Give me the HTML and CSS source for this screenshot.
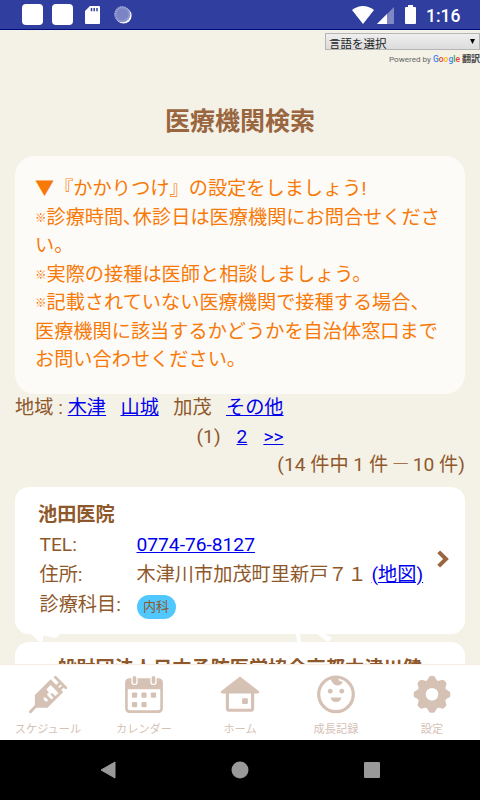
FILE: index.html
```
<!DOCTYPE html>
<html lang="ja">
  <head>
    <meta charset="utf-8">
    <title>医療機関検索</title>
    <link rel="stylesheet" href="styles.css">
  </head>
  <body>

    <!-- status bar -->
    <header class="status">
      <div class="status-left">
        <span class="app-icon"></span>
        <span class="app-icon"></span>
        <svg class="sd" width="15" height="18" viewBox="0 0 15 18">
          <path d="M5 0H14Q15 0 15 1V17Q15 18 14 18H1Q0 18 0 17V5Z" fill="#fff"/>
          <path d="M6.5 2v3.3M9.2 2v3.3M12 2v3.3" stroke="#303f9f" stroke-width="1.5"/>
        </svg>
        <svg class="sync" width="18" height="18" viewBox="0 0 18 18">
          <circle cx="9.6" cy="9.6" r="8" fill="#fff"/>
          <circle cx="8.3" cy="8.3" r="8" fill="#7b84c4"/>
          <circle cx="8.3" cy="8.3" r="7" fill="none" stroke="#a8aed9" stroke-width="2" stroke-dasharray="1 1.2"/>
        </svg>
      </div>
      <div class="status-right">
        <svg width="22" height="18" viewBox="0 0 22 18"><path d="M0 4Q11 -4 22 4L11 18Z" fill="#fff"/></svg>
        <svg class="signal" width="17" height="17" viewBox="0 0 17 17"><path d="M0 17L17 0V17Z" fill="#7f88c5"/><path d="M0 17L10 7V17Z" fill="#fff"/></svg>
        <svg class="battery" width="11" height="19" viewBox="0 0 11 19"><path d="M3 0H8V2H10Q11 2 11 3V18Q11 19 10 19H1Q0 19 0 18V3Q0 2 1 2H3Z" fill="#fff"/></svg>
        <span class="clock">1:16</span>
      </div>
    </header>

    <main class="content">
      <div class="translate">
        <div class="lang"><span>言語を選択</span><i></i></div>
        <div class="powered">Powered by <b class="google"><i class="g-blue">G</i><i class="g-red">o</i><i class="g-yellow">o</i><i class="g-blue">g</i><i class="g-green">l</i><i class="g-red">e</i></b> <b class="honyaku">翻訳</b></div>
      </div>

      <h1>医療機関検索</h1>

      <div class="notice">
        ▼『かかりつけ』の設定をしましょう!<br>
        <span class="kome">※</span>診療時間､休診日は医療機関にお問合せください。<br>
        <span class="kome">※</span>実際の接種は医師と相談しましょう。<br>
        <span class="kome">※</span>記載されていない医療機関で接種する場合、医療機関に該当するかどうかを自治体窓口までお問い合わせください。
      </div>

      <div class="area">
        <span class="area-label">地域 :</span>
        <a href="#">木津</a>
        <a href="#">山城</a>
        <span>加茂</span>
        <a href="#">その他</a>
      </div>
      <div class="pager">
        <span>(1)</span>
        <a href="#">2</a>
        <a href="#">&gt;&gt;</a>
      </div>
      <div class="count">(14 件中 1 件 <span class="dash">─</span> 10 件)</div>

      <section class="card">
        <h2>池田医院</h2>
        <dl>
          <dt>TEL:</dt>
          <dd><a href="#">0774-76-8127</a></dd>
          <dt>住所:</dt>
          <dd>木津川市加茂町里新戸７１ <a href="#">(地図)</a></dd>
          <dt>診療科目:</dt>
          <dd><span class="tag">内科</span></dd>
        </dl>
        <svg class="arrow" width="12" height="18" viewBox="0 0 12 18"><path d="M1.7 1.8L9 9L1.7 16.2" fill="none" stroke="#996640" stroke-width="4"/></svg>
      </section>

      <!-- background doodles between the cards -->
      <svg class="doodle" width="450" height="8" viewBox="0 0 450 8">
        <path d="M16 0H28V7.500H24Q20 4 16 0ZM28 0H45L41 4L28 1.500ZM281 0h4l1 8h-4zM302 0h8l7 4-4 4z" fill="#fff"/>
      </svg>

      <section class="card card-next">
        <h2>一般財団法人日本予防医学協会京都木津川健</h2>
      </section>
    </main>

    <!-- tab bar -->
    <nav class="tabs">
      <a class="tab">
        <svg width="42" height="42" viewBox="0 0 40 40">
          <path d="M3.300 37L9 31" stroke="#d6c1b5" stroke-width="2.800" stroke-linecap="round"/>
          <path d="M7.500 32V21L22.500 6L34.500 18L19.500 33H8.500Z" fill="#d6c1b5"/>
          <path d="M18.500 15.500L22.500 11.500L30 19L27 22L24 19L22 20.500Z" fill="#fff"/>
          <path d="M17 24.500L18.500 26M20.500 20.500L23.500 23.500" stroke="#fff" stroke-width="2.600" stroke-linecap="round"/>
          <path d="M27 4L37 14M32 9L27.500 13.500M35 12L31 16" stroke="#d6c1b5" stroke-width="2.600" stroke-linecap="round"/>
        </svg>
        <span>スケジュール</span>
      </a>
      <a class="tab">
        <svg width="42" height="42" viewBox="0 0 40 40">
          <rect x="2" y="5" width="36" height="33" rx="4" fill="#d6c1b5"/>
          <path d="M4.500 15.500H35.500V33.500Q35.500 35.500 33.500 35.500H6.500Q4.500 35.500 4.500 33.500Z" fill="#fff"/>
          <path d="M11 4V8.500M29 4V8.500" stroke="#fff" stroke-width="6" stroke-linecap="round"/>
          <path d="M11 4.500V8.500M29 4.500V8.500" stroke="#d6c1b5" stroke-width="3.500" stroke-linecap="round"/>
          <g fill="#d6c1b5">
            <rect x="8.500" y="18.500" width="5" height="5" rx="1"/><rect x="17.500" y="18.500" width="5" height="5" rx="1"/><rect x="26.500" y="18.500" width="5" height="5" rx="1"/>
            <rect x="8.500" y="27.500" width="5" height="5" rx="1"/><rect x="17.500" y="27.500" width="5" height="5" rx="1"/>
          </g>
        </svg>
        <span>カレンダー</span>
      </a>
      <a class="tab">
        <svg width="42" height="42" viewBox="0 0 40 40">
          <path d="M20 4L37.500 17.500Q38 19 36.500 19H3.500Q2 19 2.500 17.500Z" fill="#d6c1b5" stroke="#d6c1b5" stroke-linejoin="round"/>
          <path d="M8 18V33.500Q8 35.500 10 35.500H30Q32 35.500 32 33.500V18" fill="none" stroke="#d6c1b5" stroke-width="3"/>
          <rect x="22" y="24" width="5.500" height="5.500" rx="1" fill="#d6c1b5"/>
        </svg>
        <span>ホーム</span>
      </a>
      <a class="tab">
        <svg width="42" height="42" viewBox="0 0 40 40">
          <circle cx="20" cy="20.300" r="16.500" fill="none" stroke="#d6c1b5" stroke-width="3"/>
          <path d="M14.500 4C15.500 9 18.500 13 23.500 11.500Q26 10.500 26.500 8Q22.500 9 22 4Z" fill="#d6c1b5"/>
          <circle cx="14.500" cy="17.300" r="2.300" fill="#d6c1b5"/>
          <circle cx="25.500" cy="17.300" r="2.300" fill="#d6c1b5"/>
          <path d="M15 23.300H25Q24.500 27.500 20 27.500T15 23.300Z" fill="#d6c1b5"/>
        </svg>
        <span>成長記録</span>
      </a>
      <a class="tab">
        <svg width="42" height="42" viewBox="0 0 40 40">
          <g fill="#d6c1b5">
            <path id="tooth" d="M14.500 8.300L17.500 3.300Q20 2 22.500 3.300L25.500 8.300V32.300L22.500 37.300Q20 38.600 17.500 37.300L14.500 32.300Z"/>
            <use href="#tooth" transform="rotate(45 20 20.300)"/>
            <use href="#tooth" transform="rotate(90 20 20.300)"/>
            <use href="#tooth" transform="rotate(135 20 20.300)"/>
            <circle cx="20" cy="20.300" r="13.800"/>
          </g>
          <circle cx="20" cy="20.300" r="6" fill="#fff"/>
        </svg>
        <span>設定</span>
      </a>
    </nav>

    <!-- android buttons -->
    <footer class="android">
      <svg width="16" height="18" viewBox="0 0 16 18"><path d="M15 1V17L1 9Z" fill="#999" stroke="#999" stroke-linejoin="round"/></svg>
      <svg width="18" height="18" viewBox="0 0 18 18"><circle cx="9" cy="9" r="8.500" fill="#999"/></svg>
      <svg width="16" height="16" viewBox="0 0 16 16"><rect width="16" height="16" rx="1" fill="#999"/></svg>
    </footer>

  </body>
</html>
```
FILE: styles.css
```
* {
  box-sizing: border-box;
}

body {
  margin: 0;
  width: 480px;
  height: 800px;
  display: flex;
  flex-direction: column;
  overflow: hidden;
  background: #f4f1e6;
  color: #8f582b;
  font-family: Roboto, 'Noto Sans CJK JP', sans-serif;
  font-size: 19.2px;
  font-weight: 400;
  line-height: 28.5px;
}

svg {
  display: block;
}

a {
  color: #0000ee;
}

/* status bar */
.status {
  flex: none;
  height: 30px;
  display: flex;
  justify-content: space-between;
  background: #303f9f;
  border-bottom: 1px solid #000a80;
}

.status-left,
.status-right {
  display: flex;
  align-items: center;
}

.status-left {
  padding-left: 22px;
}

.app-icon {
  width: 21px;
  height: 21px;
  margin-right: 9px;
  border-radius: 4px;
  background: #fff;
}

.sd {
  margin-left: 3px;
}

.sync {
  margin-left: 14px;
}

.status-right {
  padding-right: 19px;
}

.signal {
  margin: 2px 0 0 3px;
}

.battery {
  margin-left: 11px;
}

.clock {
  width: 35px;
  margin: 3px 0 0 10px;
  color: #fff;
  font-size: 17.5px;
  font-weight: 500;
  white-space: nowrap;
}

.content {
  flex: 1;
  min-height: 0;
  padding: 3px 15px 0;
  overflow: hidden;
}

/* google translate box */
.translate {
  height: 33px;
  margin-right: -15px;
}

.lang {
  width: 155px;
  height: 17px;
  margin-left: auto;
  padding: 0 4px 0 3px;
  display: flex;
  justify-content: space-between;
  overflow: hidden;
  border: 1px solid #b5b5b5;
  background: linear-gradient(#efefef, #dcdcdc);
  color: #222;
  font-size: 11.5px;
  line-height: 20px;
}

.lang i {
  margin-top: 5px;
  width: 5px;
  height: 5px;
  background: #000;
  clip-path: polygon(0 0, 100% 0, 50% 100%);
}

.powered {
  display: flex;
  justify-content: flex-end;
  gap: 2px;
  color: #666;
  font-size: 8.1px;
  line-height: 19px;
  white-space: nowrap;
}

.google {
  font-size: 8.5px;
  font-weight: 500;
  line-height: 18px;
}

.google i {
  font-style: normal;
}

.g-blue { color: #4285f4; }
.g-red { color: #ea4335; }
.g-yellow { color: #fbbc05; }
.g-green { color: #34a853; }

.honyaku {
  color: #444;
  font-size: 9px;
}

h1 {
  margin: 38px 0 16px;
  text-align: center;
  color: #996640;
  font-size: 25px;
  line-height: 36px;
}

.notice {
  height: 238px;
  padding: 19px 20px 0;
  border-radius: 20px;
  background: #fdfbf8;
  color: #f77a08;
}

.kome {
  font-size: 11.5px;
  font-weight: 700;
  line-height: 1;
  vertical-align: 2px;
}

/* region links and paging */
.area,
.pager {
  display: flex;
}

.area {
  gap: 14.4px;
}

.area-label {
  margin-right: -9.5px;
}

.pager {
  justify-content: center;
  gap: 16px;
}

.count {
  height: 36px;
  text-align: right;
}

.dash {
  display: inline-block;
  transform: scaleX(.75);
  margin: 0 -2px;
}

.card {
  position: relative;
  height: 146.500px;
  padding: 12.500px 23px 0;
  border-radius: 14px;
  background: #fff;
}

h2 {
  margin: 0;
  font-size: 19.2px;
  line-height: 30px;
}

dl {
  margin: 0 -10px 0 1.500px;
  display: grid;
  grid-template-columns: 97px 1fr;
  grid-auto-rows: 30px;
  line-height: 30px;
}

dd {
  margin: 0;
  white-space: nowrap;
}

.tag {
  display: block;
  width: 39px;
  height: 24px;
  margin-top: 5px;
  border-radius: 12px;
  background: #50c8ff;
  font-size: 13px;
  line-height: 23px;
  text-align: center;
}

.arrow {
  position: absolute;
  right: 16px;
  top: 63px;
}

.card-next h2 {
  white-space: nowrap;
}

/* tab bar */
.tabs {
  flex: none;
  height: 76px;
  display: flex;
  border-top: 1px solid #f6ece0;
  background: #fff;
}

.tab {
  flex: 1;
  display: flex;
  flex-direction: column;
  align-items: center;
  padding-top: 8px;
  color: #d6c1b5;
  font-size: 11.200px;
  line-height: 22px;
}

.tab svg {
  flex: none;
}

.tab span {
  padding-top: 4px;
}

.android {
  flex: none;
  height: 60px;
  padding: 0 100px;
  display: flex;
  align-items: center;
  justify-content: space-between;
  background: #000;
}
```
